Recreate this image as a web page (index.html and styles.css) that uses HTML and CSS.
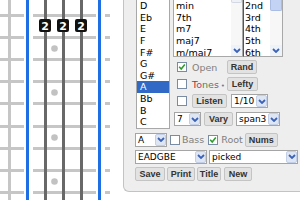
FILE: index.html
```html
<!DOCTYPE html>
<html>
<head>
<meta charset="utf-8">
<link rel="stylesheet" href="styles.css">
</head>
<body>
<div class="page">
  <svg class="board" width="123" height="200" viewBox="0 0 123 200">
    <g fill="#c6c6c6">
      <rect x="0" y="14" width="110" height="3"/>
      <rect x="0" y="36" width="110" height="3"/>
      <rect x="0" y="58" width="110" height="3"/>
      <rect x="0" y="80" width="110" height="3"/>
      <rect x="0" y="102" width="110" height="3"/>
      <rect x="0" y="125" width="110" height="3"/>
      <rect x="0" y="147" width="110" height="3"/>
      <rect x="0" y="169" width="110" height="3"/>
      <rect x="0" y="191" width="110" height="3"/>
      <rect x="8" y="0" width="3" height="200"/>
    </g>
    <g fill="#ffffff">
      <rect x="24" y="0" width="9" height="200"/>
      <rect x="96" y="0" width="9" height="200"/>
    </g>
    <g fill="#686868">
      <rect x="44" y="0" width="3" height="200"/>
      <rect x="62" y="0" width="3" height="200"/>
      <rect x="80" y="0" width="3" height="200"/>
    </g>
    <g fill="#1f6fe4">
      <rect x="26" y="0" width="3" height="200"/>
      <rect x="98" y="0" width="3" height="200"/>
    </g>
    <g fill="#c2c2c2">
      <circle cx="54.5" cy="48.5" r="3.3"/>
      <circle cx="54.5" cy="92.5" r="3.3"/>
      <circle cx="54.5" cy="137.5" r="3.3"/>
      <circle cx="54.5" cy="181.5" r="3.3"/>
    </g>
    <g fill="#111111">
      <rect x="39" y="19" width="12" height="13" rx="2"/>
      <rect x="57" y="19" width="12" height="13" rx="2"/>
      <rect x="75" y="19" width="12" height="13" rx="2"/>
    </g>
    <g class="badge-text" fill="#ffffff" text-anchor="middle">
      <text x="45" y="29.5">2</text>
      <text x="63" y="29.5">2</text>
      <text x="81" y="29.5">2</text>
    </g>
  </svg>

  <div class="panel">
    <div class="top">
      <div class="list list-root">
        <div class="items">
          <div class="item">D</div>
          <div class="item">Eb</div>
          <div class="item">E</div>
          <div class="item">F</div>
          <div class="item">F#</div>
          <div class="item">G</div>
          <div class="item">G#</div>
          <div class="item sel">A</div>
          <div class="item">Bb</div>
          <div class="item">B</div>
          <div class="item">C</div>
        </div>
      </div>
      <div class="rightcol">
        <div class="lists">
          <div class="list list-q">
            <div class="items items-q">
              <div class="item">min</div>
              <div class="item">7th</div>
              <div class="item">m7</div>
              <div class="item">maj7</div>
              <div class="item">m/maj7</div>
            </div>
            <div class="sb">
              <div class="thumb thumb-q"></div>
              <div class="sb-fill"></div>
              <div class="sb-btn"><svg width="8" height="5" viewBox="0 0 8 5"><polyline points="1,1 4,4 7,1" fill="none" stroke="#3a62b8" stroke-width="1.8"/></svg></div>
            </div>
          </div>
          <div class="list list-i">
            <div class="items items-i">
              <div class="item">2nd</div>
              <div class="item">3rd</div>
              <div class="item">4th</div>
              <div class="item">5th</div>
              <div class="item">6th</div>
            </div>
            <div class="sb sb-i">
              <div class="thumb thumb-i"></div>
              <div class="sb-fill"></div>
              <div class="sb-btn"><svg width="8" height="5" viewBox="0 0 8 5"><polyline points="1,1 4,4 7,1" fill="none" stroke="#3a62b8" stroke-width="1.8"/></svg></div>
            </div>
          </div>
        </div>

        <div class="ctrls">
          <span class="cb cb-g"><svg width="8" height="8" viewBox="0 0 8 8"><polyline points="1.2,3.8 3.2,6 6.8,1.6" fill="none" stroke="#2d9c2d" stroke-width="1.6"/></svg></span>
          <span class="lbl">Open</span>
          <span class="btn w-rand">Rand</span>

          <span class="cb cb-g"></span>
          <span class="lbl tones"><span class="t1">T</span><span class="t2">o</span><span class="t3">n</span><span class="t4">e</span><span class="t5">s</span><span class="dot">•</span></span>
          <span class="btn w-lefty">Lefty</span>

          <span class="cb cb-g"></span>
          <span class="btn w-listen">Listen</span>
          <span class="select w-rate"><span class="val">1/10</span><span class="arrow"><svg width="8" height="5" viewBox="0 0 8 5"><polyline points="1,1 4,4 7,1" fill="none" stroke="#3a62b8" stroke-width="1.8"/></svg></span></span>
        </div>

        <div class="row4">
          <span class="select w-seven"><span class="val">7</span><span class="arrow"><svg width="8" height="5" viewBox="0 0 8 5"><polyline points="1,1 4,4 7,1" fill="none" stroke="#3a62b8" stroke-width="1.8"/></svg></span></span>
          <span class="btn w-vary">Vary</span>
          <span class="select w-span"><span class="val">span3</span><span class="arrow"><svg width="8" height="5" viewBox="0 0 8 5"><polyline points="1,1 4,4 7,1" fill="none" stroke="#3a62b8" stroke-width="1.8"/></svg></span></span>
        </div>
      </div>
    </div>

    <div class="row row5">
      <span class="select w-key"><span class="val">A</span><span class="arrow"><svg width="8" height="5" viewBox="0 0 8 5"><polyline points="1,1 4,4 7,1" fill="none" stroke="#3a62b8" stroke-width="1.8"/></svg></span></span>
      <span class="cb cb-bass"></span>
      <span class="lbl lbl-bass">Bass</span>
      <span class="cb cb-root"><svg width="8" height="8" viewBox="0 0 8 8"><polyline points="1.2,3.8 3.2,6 6.8,1.6" fill="none" stroke="#2d9c2d" stroke-width="1.6"/></svg></span>
      <span class="lbl lbl-root">Root</span>
      <span class="btn w-nums">Nums</span>
    </div>

    <div class="row">
      <span class="select w-tuning"><span class="val">EADGBE</span><span class="arrow"><svg width="8" height="5" viewBox="0 0 8 5"><polyline points="1,1 4,4 7,1" fill="none" stroke="#3a62b8" stroke-width="1.8"/></svg></span></span>
      <span class="select w-style"><span class="val">picked</span><span class="arrow"><svg width="8" height="5" viewBox="0 0 8 5"><polyline points="1,1 4,4 7,1" fill="none" stroke="#3a62b8" stroke-width="1.8"/></svg></span></span>
    </div>

    <div class="row">
      <span class="btn w-save">Save</span>
      <span class="btn w-print">Print</span>
      <span class="btn w-title">Title</span>
      <span class="btn w-new">New</span>
    </div>
  </div>
</div>
</body>
</html>
```

FILE: styles.css
```css
html, body {
  margin: 0;
  padding: 0;
}
body {
  width: 300px;
  height: 200px;
  overflow: hidden;
  background: #ffffff;
  font-family: "DejaVu Sans", sans-serif;
  color: #000;
}
.page {
  display: flex;
  align-items: flex-start;
}
.board {
  flex: none;
  display: block;
}
.badge-text {
  font-family: "DejaVu Sans", sans-serif;
  font-weight: bold;
  font-size: 11px;
}
.panel {
  flex: none;
  width: 165px;
  margin-top: -2px;
  background: #eeeeee;
  border: 1px solid #c3c3c3;
  border-right: none;
  border-radius: 0 0 0 6px;
  padding: 0 0 10px 11px;
}
.top {
  display: flex;
  align-items: flex-start;
}
.list {
  box-sizing: border-box;
  display: flex;
  overflow: hidden;
  background: #ffffff;
  border: 1px solid #a8a8a8;
}
.list-root {
  width: 34px;
  margin-left: 1px;
}
.items {
  flex: 1;
  min-width: 0;
}
.item {
  height: 11.64px;
  line-height: 11.64px;
  font-size: 9.5px;
  padding-left: 3px;
  white-space: nowrap;
}
.items-q .item {
  padding-left: 2px;
}
.items-i .item {
  padding-left: 1px;
}
.sel {
  background: #3169c6;
  color: #ffffff;
}
.rightcol {
  margin-left: 3px;
}
.lists {
  display: flex;
}
.list-q {
  width: 70px;
  height: 58px;
}
.list-i {
  width: 40px;
  height: 58px;
  border-left-color: #555555;
}
.sb {
  flex: none;
  width: 11px;
  display: flex;
  flex-direction: column;
  background: #f7f7f7;
}
.sb-i {
  width: 12px;
}
.thumb {
  flex: none;
  box-sizing: border-box;
  border-radius: 0 0 2px 2px;
}
.thumb-q {
  height: 3px;
  background: #eef1f6;
  border: 1px solid #d3d8e2;
  border-top: none;
}
.thumb-i {
  height: 11px;
  background: #c3d3f3;
  border: 1px solid #a8bce4;
  border-top: none;
}
.sb-fill {
  flex: 1;
}
.sb-btn {
  flex: none;
  height: 11px;
  display: flex;
  align-items: center;
  justify-content: center;
  background: #eef2f9;
}
.ctrls {
  display: grid;
  grid-template-columns: 19px 35px auto;
  grid-auto-rows: 14px;
  row-gap: 3px;
  margin-top: 3px;
  align-items: center;
  justify-items: start;
}
.cb {
  box-sizing: border-box;
  width: 10px;
  height: 10px;
  border: 1px solid #7a8ba4;
  background: #ffffff;
  display: flex;
  align-items: center;
  justify-content: center;
}
.cb-g {
  margin-left: 4px;
}
.lbl {
  font-size: 9.5px;
  color: #808080;
  white-space: nowrap;
}
.tones .t1 { color: #c0282d; }
.tones .t2 { color: #b0407a; }
.tones .t3 { color: #3c8c4a; }
.tones .t4 { color: #3a8a78; }
.tones .t5 { color: #8a4a9a; }
.tones .dot {
  margin-left: 2px;
  font-size: 7px;
  color: #6a7aa0;
}
.btn {
  box-sizing: border-box;
  height: 14px;
  display: flex;
  align-items: center;
  justify-content: center;
  background: #e2e2e2;
  border: 1px solid #c4c4c4;
  border-radius: 2px;
  font-family: "Liberation Sans", Arial, sans-serif;
  font-weight: bold;
  font-size: 9px;
  color: #333333;
  white-space: nowrap;
}
.select {
  box-sizing: border-box;
  height: 14px;
  display: flex;
  align-items: center;
  background: #ffffff;
  border: 1px solid #a5a5a5;
  font-size: 9px;
}
.val {
  flex: 1;
  padding-left: 2px;
  white-space: nowrap;
  overflow: hidden;
}
.arrow {
  flex: none;
  box-sizing: border-box;
  width: 11px;
  height: 12px;
  display: flex;
  align-items: center;
  justify-content: center;
  background: #dfe6f3;
  border: 1px solid #c3cfe6;
  border-radius: 2px;
}
.w-rand { width: 30px; }
.w-lefty { width: 31px; }
.w-listen { width: 35px; }
.w-rate { width: 37px; margin-left: 4px; }
.row4 {
  display: flex;
  margin-top: 4px;
  height: 14px;
}
.w-seven { width: 27px; margin-left: 1px; }
.w-vary { width: 29px; margin-left: 3px; }
.w-span { width: 44px; margin-left: 3px; }
.row {
  display: flex;
  align-items: center;
  height: 14px;
  margin-top: 3px;
}
.row5 {
  margin-top: 4px;
}
.w-key { width: 32px; }
.cb-bass { margin-left: 3px; }
.lbl-bass { margin-left: 2px; }
.cb-root { margin-left: 4px; }
.lbl-root { margin-left: 3px; }
.w-nums { width: 33px; margin-left: 2px; }
.w-tuning { width: 72px; }
.w-style { width: 89px; margin-left: 2px; }
.w-save { width: 30px; }
.w-print { width: 28px; margin-left: 2px; }
.w-title { width: 24px; margin-left: 2px; }
.w-new { width: 28px; margin-left: 3px; }
```
